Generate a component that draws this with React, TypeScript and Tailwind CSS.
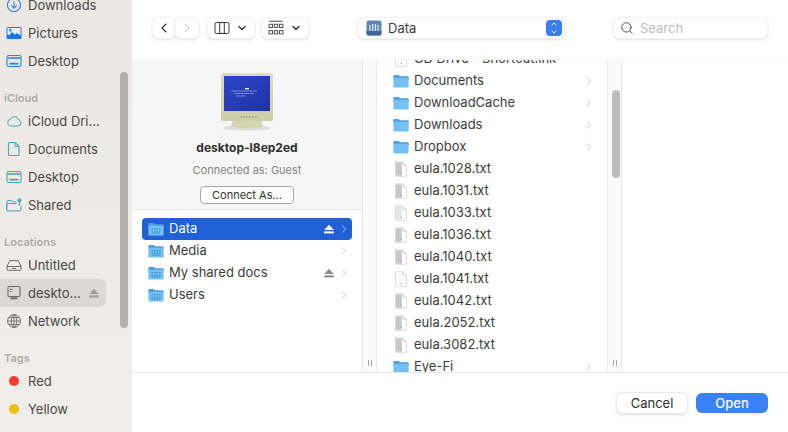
import { ChevronDown, ChevronLeft, ChevronRight, ChevronUp, Search } from "lucide-react";

function Svg({ children, className = "w-4 h-4", view = "0 0 16 16" }: { children: React.ReactNode; className?: string; view?: string }) {
  return (
    <svg viewBox={view} className={className} fill="none">
      {children}
    </svg>
  );
}

const blue = "#2f80e4";
const teal = "#4aa5b5";
const grey = "#6f6c69";

function DownloadsIcon() {
  return (
    <Svg>
      <circle cx="8" cy="8" r="6.6" stroke={blue} strokeWidth="1.1" />
      <path d="M8 4.2v7M5.4 8.6 8 11.2l2.6-2.6" stroke={blue} strokeWidth="1.1" strokeLinecap="round" strokeLinejoin="round" />
    </Svg>
  );
}
function PicturesIcon() {
  return (
    <Svg>
      <rect x="0.5" y="2" width="15" height="12" rx="1.5" fill="#1878ee" />
      <rect x="1.5" y="3" width="13" height="7" fill="#e8f2fe" />
      <circle cx="4.4" cy="5.3" r="1.2" fill="#1878ee" />
      <path d="M1.5 12 6 7l3 2.6 2-1.6 3.5 3v2h-13z" fill="#1878ee" />
    </Svg>
  );
}
function DesktopIcon({ color }: { color: string }) {
  return (
    <Svg>
      <rect x="1" y="2.5" width="14" height="11" rx="1.5" stroke={color} strokeWidth="1.1" />
      <path d="M1.5 5h13" stroke={color} strokeWidth="1.6" />
      <rect x="3.5" y="9.8" width="9" height="1.8" fill={color} />
    </Svg>
  );
}
function CloudIcon() {
  return (
    <Svg>
      <path d="M4.3 13h7.9a3 3 0 0 0 .6-5.9A4.4 4.4 0 0 0 4.6 6 3.6 3.6 0 0 0 4.3 13Z" stroke={teal} strokeWidth="1" strokeLinejoin="round" />
    </Svg>
  );
}
function DocIcon() {
  return (
    <Svg>
      <path d="M3.5 1.5h5.6L13 5.4v8.1a1 1 0 0 1-1 1H3.5a1 1 0 0 1-1-1v-11a1 1 0 0 1 1-1Z" stroke={teal} strokeWidth="1.1" strokeLinejoin="round" />
      <path d="M9 1.6v3.9h3.9" stroke={teal} strokeWidth="1" />
    </Svg>
  );
}
function SharedIcon() {
  return (
    <Svg>
      <path d="M.8 13V4.4c0-.5.4-.9.9-.9h3.6l1 1.3h4.2M15 8.5V13c0 .5-.4.9-.9.9H1.7A.9.9 0 0 1 .8 13V6.5h10" stroke={teal} strokeWidth="1" strokeLinejoin="round" />
      <circle cx="13.4" cy="3.4" r="2" fill={teal} />
      <path d="M12.6 5.6h1.6v2.6h-1.6z" fill={teal} />
    </Svg>
  );
}
function DriveIcon() {
  return (
    <Svg>
      <path d="M1 9.5 3.8 3.6h8.4L15 9.5v2.8a1 1 0 0 1-1 1H2a1 1 0 0 1-1-1V9.5Z" stroke={grey} strokeWidth="1" strokeLinejoin="round" />
      <path d="M1 9.5h14" stroke={grey} strokeWidth="1" />
      <path d="M6 11.4h4" stroke={grey} strokeWidth="1" />
    </Svg>
  );
}
function ComputerIcon() {
  return (
    <Svg>
      <rect x="2" y="1.5" width="12" height="10" rx="1" stroke={grey} strokeWidth="1.1" />
      <path d="M4 4.5h2.5M4 6.5h1.5" stroke={grey} strokeWidth="1" />
      <rect x="4.5" y="12.3" width="7" height="2" fill={grey} />
    </Svg>
  );
}
function GlobeIcon() {
  return (
    <Svg>
      <circle cx="8" cy="8" r="6.4" stroke={grey} strokeWidth="1" />
      <ellipse cx="8" cy="8" rx="2.8" ry="6.4" stroke={grey} strokeWidth="0.9" />
      <path d="M8 1.6v12.8M1.6 8h12.8M2.6 4.6h10.8M2.6 11.4h10.8" stroke={grey} strokeWidth="0.9" />
    </Svg>
  );
}
function Dot({ color }: { color: string }) {
  return (
    <Svg>
      <circle cx="8" cy="8" r="5" fill={color} />
    </Svg>
  );
}
function Eject({ color }: { color: string }) {
  return (
    <Svg className="w-2.5 h-2.5" view="0 0 10 10">
      <path d="M5 .8 9.8 6H.2z" fill={color} />
      <rect x="0.2" y="7.4" width="9.6" height="2" fill={color} />
    </Svg>
  );
}
function Folder({ net = false }: { net?: boolean }) {
  return (
    <Svg>
      <path d="M.4 3.2c0-.7.5-1.2 1.2-1.2h3.6c.4 0 .7.1 1 .4l.9.8h7.4c.7 0 1.2.5 1.2 1.2v2H.4z" fill="#4f9fd9" />
      <path d="M.4 4.8h15.2v8.6c0 .7-.5 1.2-1.2 1.2H1.6c-.7 0-1.2-.5-1.2-1.2z" fill="#74c0f4" />
      {net && <path d="M3.6 7h1.4v1.4H3.6zM6 7h1.4v1.4H6zM8.6 7H10v1.4H8.6zM11 7h1.4v1.4H11zM3.6 9.4h1.4v1.4H3.6zM6 9.4h1.4v1.4H6zM8.6 9.4H10v1.4H8.6zM11 9.4h1.4v1.4H11zM3.6 11.6h8.8v1H3.6z" fill="#3f8ecb" />}
    </Svg>
  );
}
function TxtFile({ tone }: { tone: string }) {
  return (
    <Svg>
      <path d="M2.6.8h7.2l3.6 3.6v10.4a.5.5 0 0 1-.5.5H3a.5.5 0 0 1-.5-.5V.8Z" fill="#ffffff" stroke="#c9c9c9" strokeWidth="0.7" />
      <path d="M3 1.4h5.8v13.4H3z" fill={tone} />
      <path d="M9.8.9v3.5h3.5" stroke="#c9c9c9" strokeWidth="0.7" />
      <circle cx="8" cy="12.6" r="0.5" fill="#777777" />
    </Svg>
  );
}
function Monitor() {
  return (
    <svg viewBox="0 0 54 60" className="w-13.5 h-15">
      <defs>
        <linearGradient id="bezel" x1="0" y1="0" x2="0" y2="1">
          <stop offset="0" stopColor="#deddbb" />
          <stop offset="1" stopColor="#cfceab" />
        </linearGradient>
        <linearGradient id="scr" x1="0" y1="0" x2="1" y2="1">
          <stop offset="0" stopColor="#2d46c4" />
          <stop offset="1" stopColor="#1f33a8" />
        </linearGradient>
      </defs>
      <ellipse cx="27" cy="56" rx="24" ry="2.5" fill="#dcdcd8" />
      <path d="M13 48h28l2 6c-5 3-27 3-32 0z" fill="#d6d5b2" />
      <rect x="1" y="1" width="52" height="48" rx="2" fill="url(#bezel)" />
      <rect x="4" y="4" width="46" height="35" fill="url(#scr)" />
      <path d="M11 19h26M14 21.5h20M16 24h10" stroke="#aab6ee" strokeWidth="0.6" />
      <rect x="25" y="16" width="4" height="1.4" fill="#dfe4fa" />
      <path d="M20 45h18" stroke="#a8a884" strokeWidth="1.4" strokeDasharray="2 1" />
    </svg>
  );
}
function NetDrive() {
  return (
    <Svg>
      <rect x="0.5" y="0.5" width="15" height="15" rx="2" fill="#5f86b4" />
      <path d="M0.5 11h15v2.5a2 2 0 0 1-2 2h-11a2 2 0 0 1-2-2z" fill="#3f6796" />
      <path d="M4 5v6M6.7 4v7M9.4 4v7M12 5v6" stroke="#dbe8f6" strokeWidth="1.2" />
    </Svg>
  );
}

function SideHead({ label }: { label: string }) {
  return <div className="h-8 flex items-end pb-px pl-1 text-[11px] leading-4 font-semibold text-[#aeaba7]">{label}</div>;
}
function SideRow({ icon, label, active, eject }: { icon: React.ReactNode; label: string; active?: boolean; eject?: boolean }) {
  return (
    <div className={`h-7 w-26.5 flex items-center rounded-r-md text-[#4b4845] ${active ? "bg-[#dcd9d5]" : ""}`}>
      <div className="w-7 flex justify-center shrink-0">{icon}</div>
      <span className="whitespace-nowrap">{label}</span>
      {eject && (
        <span className="ml-2">
          <Eject color="#a09d99" />
        </span>
      )}
    </div>
  );
}

function ListRow({ icon, label, chevron, eject, active }: { icon: React.ReactNode; label: string; chevron?: boolean; eject?: boolean; active?: boolean }) {
  return (
    <div className={`h-5.5 flex items-center gap-1.5 pl-1.5 pr-1 rounded ${active ? "bg-[#2161d8] text-white" : "text-[#3c3c3c]"}`}>
      <span className="shrink-0">{icon}</span>
      <span className="flex-1 whitespace-nowrap -ml-px pb-0.5">{label}</span>
      {eject && (
        <span className="-mr-0.5">
          <Eject color={active ? "#ffffff" : "#8a8a8a"} />
        </span>
      )}
      {chevron && <ChevronRight className={`w-3 h-3 -mr-0.5 ${active ? "text-[#d5e2f8]" : "text-[#b4b4b4]"}`} strokeWidth={1.5} />}
    </div>
  );
}

function Handle() {
  return (
    <div className="mt-auto mb-1.5 flex justify-center gap-0.5">
      <span className="w-px h-1.5 bg-[#a8a8a8]" />
      <span className="w-px h-1.5 bg-[#a8a8a8]" />
    </div>
  );
}

const btn = "h-5.5 flex items-center justify-center bg-white rounded-md border border-gray-100 shadow-sm";

const files: { label: string; kind: "folder" | "txt" | "light" | "blank" }[] = [
  { label: "CD Drive - Shortcut.lnk", kind: "blank" },
  { label: "Documents", kind: "folder" },
  { label: "DownloadCache", kind: "folder" },
  { label: "Downloads", kind: "folder" },
  { label: "Dropbox", kind: "folder" },
  { label: "eula.1028.txt", kind: "txt" },
  { label: "eula.1031.txt", kind: "txt" },
  { label: "eula.1033.txt", kind: "light" },
  { label: "eula.1036.txt", kind: "txt" },
  { label: "eula.1040.txt", kind: "txt" },
  { label: "eula.1041.txt", kind: "blank" },
  { label: "eula.1042.txt", kind: "txt" },
  { label: "eula.2052.txt", kind: "txt" },
  { label: "eula.3082.txt", kind: "txt" },
  { label: "Eye-Fi", kind: "folder" },
];

function fileIcon(kind: string) {
  if (kind === "folder") return <Folder />;
  if (kind === "txt") return <TxtFile tone="#c8c8c8" />;
  if (kind === "light") return <TxtFile tone="#e6e6e6" />;
  return <TxtFile tone="#fbfbfb" />;
}

export default function App() {
  return (
    <div className="relative w-screen h-screen overflow-hidden flex bg-white text-[13px] leading-4 font-['Inter',sans-serif]">
      <aside className="relative w-33 shrink-0 overflow-hidden bg-linear-to-b from-[#ebe8e4] to-[#f0eeeb]">
        <div className="-mt-2.25">
          <SideRow icon={<DownloadsIcon />} label="Downloads" />
          <SideRow icon={<PicturesIcon />} label="Pictures" />
          <SideRow icon={<DesktopIcon color={blue} />} label="Desktop" />
          <SideHead label="iCloud" />
          <SideRow icon={<CloudIcon />} label="iCloud Dri..." />
          <SideRow icon={<DocIcon />} label="Documents" />
          <SideRow icon={<DesktopIcon color={teal} />} label="Desktop" />
          <SideRow icon={<SharedIcon />} label="Shared" />
          <SideHead label="Locations" />
          <SideRow icon={<DriveIcon />} label="Untitled" />
          <SideRow icon={<ComputerIcon />} label="deskto..." active eject />
          <SideRow icon={<GlobeIcon />} label="Network" />
          <SideHead label="Tags" />
          <SideRow icon={<Dot color="#ff3b30" />} label="Red" />
          <SideRow icon={<Dot color="#efbf0c" />} label="Yellow" />
        </div>
        <div className="absolute right-1 top-18 w-2 h-64 rounded-full bg-[#b3afaa]" />
      </aside>

      <main className="flex-1 min-w-0 flex flex-col">
        <header className="h-15 shrink-0 flex items-center pl-5 pr-5 pb-1 border-b border-gray-100">
          <div className="flex">
            <div className={`${btn} w-6`}>
              <ChevronLeft className="w-4 h-4 text-[#333333]" strokeWidth={1.75} />
            </div>
            <div className={`${btn} w-6 -ml-px`}>
              <ChevronRight className="w-4 h-4 text-[#c4c4c4]" strokeWidth={1.5} />
            </div>
          </div>
          <div className={`${btn} w-12 ml-2 gap-1.5`}>
            <svg viewBox="0 0 15 12" className="w-4 h-3" fill="none" stroke="#3c3c3c" strokeWidth="1">
              <rect x="0.5" y="0.5" width="14" height="11" rx="1.5" />
              <path d="M5.2 .5v11M9.8 .5v11" />
            </svg>
            <ChevronDown className="w-3 h-3 text-[#3c3c3c]" strokeWidth={3} />
          </div>
          <div className={`${btn} w-12 ml-1.5 gap-1.5`}>
            <svg viewBox="0 0 15 15" className="w-4 h-4" fill="none" stroke="#4a4a4a" strokeWidth="0.9">
              <path d="M1 1.2h13" />
              <rect x="1" y="4" width="3.2" height="3" />
              <rect x="5.9" y="4" width="3.2" height="3" />
              <rect x="10.8" y="4" width="3.2" height="3" />
              <rect x="1" y="10" width="3.2" height="3" />
              <rect x="5.9" y="10" width="3.2" height="3" />
              <rect x="10.8" y="10" width="3.2" height="3" />
            </svg>
            <ChevronDown className="w-3 h-3 text-[#3c3c3c]" strokeWidth={3} />
          </div>
          <div className={`${btn} w-52 ml-12 justify-start pl-2 pr-0.5 text-[#3c3c3c]`}>
            <NetDrive />
            <span className="ml-1.5 flex-1">Data</span>
            <span className="w-4 h-4 rounded bg-[#3a7ff2] flex flex-col items-center justify-center">
              <ChevronUp className="w-2.5 h-2 text-white" strokeWidth={3} />
              <ChevronDown className="w-2.5 h-2 text-white" strokeWidth={3} />
            </span>
          </div>
          <div className={`${btn} flex-1 ml-12 justify-start pl-1.5 text-[#bdbdbd]`}>
            <Search className="w-3.5 h-3.5 text-[#3c3c3c]" strokeWidth={1.5} />
            <span className="ml-1.5">Search</span>
          </div>
        </header>

        <section className="flex-1 min-h-0 flex overflow-hidden">
          <div className="w-57.5 shrink-0 flex flex-col">
            <div className="h-37.5 shrink-0 bg-[#f6f6f7] border-b border-gray-200 flex flex-col items-center pt-3">
              <Monitor />
              <div className="mt-2 text-xs font-bold text-[#2f2f2f]">desktop-l8ep2ed</div>
              <div className="mt-1.5 text-[11px] text-[#858585]">Connected as: Guest</div>
              <div className="mt-2 h-4.5 w-23.5 flex items-center justify-center rounded border border-[#a9a9a9] bg-white text-[11px] text-[#333333]">
                Connect As...
              </div>
            </div>
            <div className="px-2.5 pt-2">
              <ListRow icon={<Folder net />} label="Data" chevron eject active />
              <ListRow icon={<Folder net />} label="Media" chevron />
              <ListRow icon={<Folder net />} label="My shared docs" chevron eject />
              <ListRow icon={<Folder net />} label="Users" chevron />
            </div>
          </div>
          <div className="w-3.75 shrink-0 bg-[#fafafa] border-x border-gray-200 flex flex-col">
            <Handle />
          </div>
          <div className="w-57.5 shrink-0 overflow-hidden px-2.5">
            <div className="-mt-3">
              {files.map((f) => (
                <ListRow key={f.label} icon={fileIcon(f.kind)} label={f.label} chevron={f.kind === "folder"} />
              ))}
            </div>
          </div>
          <div className="relative w-3.75 shrink-0 bg-[#fafafa] border-x border-gray-200 flex flex-col">
            <div className="absolute left-1 top-7.5 w-2 h-22 rounded-full bg-[#bdbdbd]" />
            <Handle />
          </div>
          <div className="flex-1" />
        </section>

        <footer className="h-15 shrink-0 border-t border-gray-200 flex items-center justify-end gap-2 px-5">
          <div className={`${btn} h-5 w-18 border-gray-200 text-[#2f2f2f]`}>Cancel</div>
          <div className="h-5 w-18 flex items-center justify-center rounded-md bg-[#3a82f7] text-white font-medium">Open</div>
        </footer>
      </main>
    </div>
  );
}
